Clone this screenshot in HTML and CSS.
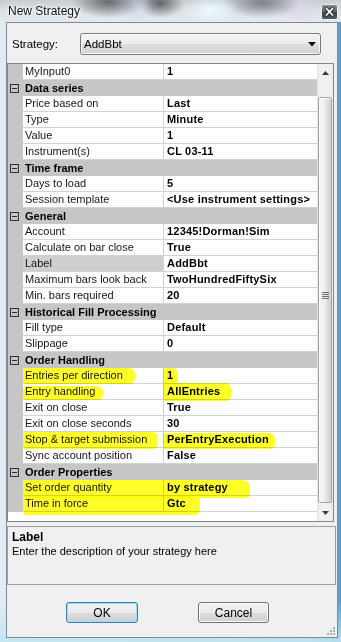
FILE: index.html
```html
<!DOCTYPE html>
<html>
<head>
<meta charset="utf-8">
<link rel="stylesheet" href="styles.css">
</head>
<body>
<div class="window">
  <div class="titlebar">
    <span class="title">New Strategy</span>
    <svg class="close" width="17" height="16" viewBox="0 0 17 16">
      <defs>
        <linearGradient id="cg" x1="0" y1="0" x2="0" y2="1">
          <stop offset="0" stop-color="#8a8d92"/>
          <stop offset="0.5" stop-color="#5b5e63"/>
          <stop offset="0.51" stop-color="#3c3f44"/>
          <stop offset="1" stop-color="#5a5e64"/>
        </linearGradient>
      </defs>
      <rect x="0.5" y="0.5" width="16" height="15" rx="2" fill="url(#cg)" stroke="#f0f0f0"/>
      <path d="M5.5 4.5 L11.5 11 M11.5 4.5 L5.5 11" stroke="#2a2a2a" stroke-width="3.4" stroke-linecap="round"/>
      <path d="M5.5 4.5 L11.5 11 M11.5 4.5 L5.5 11" stroke="#ffffff" stroke-width="1.8" stroke-linecap="round"/>
    </svg>
  </div>
  <div class="frame">
    <div class="client">
      <div class="strategy-row">
        <span class="strategy-label">Strategy:</span>
        <div class="combo">
          <span class="combo-text">AddBbt</span>
          <svg width="8" height="5" viewBox="0 0 8 5"><path d="M0 0 H8 L4 4.5 Z" fill="#111"/></svg>
        </div>
      </div>

      <div class="grid">
        <div class="rows">
          <div class="row"><div class="gut"></div><div class="name">MyInput0</div><div class="val">1</div></div>
          <div class="row cat"><div class="gut"><span class="minus"></span></div><div class="cat-title">Data series</div></div>
          <div class="row"><div class="gut"></div><div class="name">Price based on</div><div class="val">Last</div></div>
          <div class="row"><div class="gut"></div><div class="name">Type</div><div class="val">Minute</div></div>
          <div class="row"><div class="gut"></div><div class="name">Value</div><div class="val">1</div></div>
          <div class="row"><div class="gut"></div><div class="name">Instrument(s)</div><div class="val">CL 03-11</div></div>
          <div class="row cat"><div class="gut"><span class="minus"></span></div><div class="cat-title">Time frame</div></div>
          <div class="row"><div class="gut"></div><div class="name">Days to load</div><div class="val">5</div></div>
          <div class="row"><div class="gut"></div><div class="name">Session template</div><div class="val">&lt;Use instrument settings&gt;</div></div>
          <div class="row cat"><div class="gut"><span class="minus"></span></div><div class="cat-title">General</div></div>
          <div class="row"><div class="gut"></div><div class="name">Account</div><div class="val">12345!Dorman!Sim</div></div>
          <div class="row"><div class="gut"></div><div class="name">Calculate on bar close</div><div class="val">True</div></div>
          <div class="row sel"><div class="gut"></div><div class="name">Label</div><div class="val">AddBbt</div></div>
          <div class="row"><div class="gut"></div><div class="name">Maximum bars look back</div><div class="val">TwoHundredFiftySix</div></div>
          <div class="row"><div class="gut"></div><div class="name">Min. bars required</div><div class="val">20</div></div>
          <div class="row cat"><div class="gut"><span class="minus"></span></div><div class="cat-title">Historical Fill Processing</div></div>
          <div class="row"><div class="gut"></div><div class="name">Fill type</div><div class="val">Default</div></div>
          <div class="row"><div class="gut"></div><div class="name">Slippage</div><div class="val">0</div></div>
          <div class="row cat"><div class="gut"><span class="minus"></span></div><div class="cat-title">Order Handling</div></div>
          <div class="row"><div class="gut"></div><div class="name">Entries per direction</div><div class="val">1</div></div>
          <div class="row"><div class="gut"></div><div class="name">Entry handling</div><div class="val">AllEntries</div></div>
          <div class="row"><div class="gut"></div><div class="name">Exit on close</div><div class="val">True</div></div>
          <div class="row"><div class="gut"></div><div class="name">Exit on close seconds</div><div class="val">30</div></div>
          <div class="row"><div class="gut"></div><div class="name">Stop &amp; target submission</div><div class="val">PerEntryExecution</div></div>
          <div class="row"><div class="gut"></div><div class="name">Sync account position</div><div class="val">False</div></div>
          <div class="row cat"><div class="gut"><span class="minus"></span></div><div class="cat-title">Order Properties</div></div>
          <div class="row"><div class="gut"></div><div class="name">Set order quantity</div><div class="val">by strategy</div></div>
          <div class="row"><div class="gut"></div><div class="name">Time in force</div><div class="val">Gtc</div></div>

          <div class="hl hl-1"></div>
          <div class="hl hl-2"></div>
          <div class="hl hl-3"></div>
          <div class="hl hl-4"></div>
          <div class="hl hl-5"></div>
          <div class="hl hl-6"></div>
          <div class="hl hl-7"></div>
          <div class="hl hl-8"></div>
        </div>
        <div class="sb">
          <div class="sb-btn"><svg width="7" height="4" viewBox="0 0 7 4"><path d="M3.5 0 L7 4 H0 Z" fill="#3c3c3c"/></svg></div>
          <div class="thumb">
            <svg width="7" height="7" viewBox="0 0 7 7">
              <path d="M0 0.5 H7 M0 2.5 H7 M0 4.5 H7 M0 6.5 H7" stroke="#6e6e6e" stroke-width="1"/>
            </svg>
          </div>
          <div class="sb-fill"></div>
          <div class="sb-btn"><svg width="7" height="4" viewBox="0 0 7 4"><path d="M0 0 H7 L3.5 4 Z" fill="#3c3c3c"/></svg></div>
        </div>
      </div>

      <div class="desc">
        <div class="desc-title">Label</div>
        <div class="desc-text">Enter the description of your strategy here</div>
      </div>

      <div class="buttons">
        <button class="btn btn-default">OK</button>
        <button class="btn btn-cancel">Cancel</button>
      </div>

      <svg class="grip" width="10" height="10" viewBox="0 0 10 10">
        <g fill="#b0b0b0">
          <rect x="7" y="1" width="2" height="2"/>
          <rect x="4" y="4" width="2" height="2"/>
          <rect x="7" y="4" width="2" height="2"/>
          <rect x="1" y="7" width="2" height="2"/>
          <rect x="4" y="7" width="2" height="2"/>
          <rect x="7" y="7" width="2" height="2"/>
        </g>
      </svg>
    </div>
  </div>
</div>
</body>
</html>
```

FILE: styles.css
```css
html, body {
  margin: 0;
  padding: 0;
}

body {
  width: 341px;
  height: 642px;
  overflow: hidden;
  font-family: "Liberation Sans", Arial, sans-serif;
  color: #000;
}

.window {
  width: 341px;
  height: 642px;
  display: flex;
  flex-direction: column;
  background:
    linear-gradient(180deg, rgba(255,255,255,0) 600px, rgba(190,230,242,0.9) 642px),
    linear-gradient(90deg, #e3ebf2 0px, #d9e6ef 200px, #b8d3e6 300px, #5b9bcd 341px);
}

.titlebar {
  height: 22px;
  flex: none;
  display: flex;
  align-items: flex-start;
  justify-content: space-between;
  background:
    radial-gradient(ellipse 36px 16px at 108px 2px, rgba(60,64,70,0.7), rgba(60,64,70,0)),
    radial-gradient(ellipse 16px 12px at 136px 10px, rgba(205,222,240,0.8), rgba(205,222,240,0)),
    radial-gradient(ellipse 24px 15px at 160px 3px, rgba(50,54,60,0.7), rgba(50,54,60,0)),
    radial-gradient(ellipse 30px 14px at 210px 10px, rgba(235,252,255,1), rgba(235,252,255,0)),
    radial-gradient(ellipse 38px 15px at 262px 3px, rgba(70,72,80,0.6), rgba(70,72,80,0)),
    radial-gradient(ellipse 24px 12px at 296px 9px, rgba(222,214,236,0.9), rgba(222,214,236,0)),
    linear-gradient(180deg, #c9cdd2 0px, #dde1e5 12px, #e6e9ec 22px);
}

.title {
  font-size: 12px;
  line-height: 22px;
  padding-left: 8px;
  color: #111;
  text-shadow: 0 0 6px #fff, 0 0 3px #fff, 0 0 2px #fff;
}

.close {
  display: block;
  margin-top: 4px;
  margin-right: 3px;
}

.frame {
  flex: 1;
  display: flex;
  padding: 0 3px 4px 6px;
}

.client {
  position: relative;
  flex: 1;
  background: #f0f0f0;
  border: 1px solid #7d8a98;
  display: flex;
  flex-direction: column;
}

.strategy-row {
  display: flex;
  align-items: center;
  margin-top: 10px;
  height: 22px;
  padding-left: 5px;
}

.strategy-label {
  width: 68px;
  font-size: 11.5px;
}

.combo {
  box-sizing: border-box;
  width: 241px;
  height: 22px;
  border: 1px solid #7a7a7a;
  border-radius: 3px;
  background: linear-gradient(180deg, #f3f3f3 0%, #ececec 50%, #dedede 51%, #d2d2d2 100%);
  box-shadow: inset 0 0 0 1px #fafafa;
  display: flex;
  align-items: center;
  justify-content: space-between;
  padding: 0 4px 0 3px;
}

.combo-text {
  font-size: 11.5px;
}

.combo svg {
  display: block;
}

.grid {
  box-sizing: border-box;
  width: 327px;
  height: 459px;
  margin-top: 8px;
  border: 1px solid #828790;
  display: flex;
  background: #fff;
}

.rows {
  position: relative;
  flex: 1;
  overflow: hidden;
  background: #fff;
}

.row {
  display: grid;
  grid-template-columns: 15px 140px 1fr;
  height: 16px;
  font-size: 11px;
}

.gut {
  background: #c6c6c6;
}

.name {
  box-sizing: border-box;
  border-bottom: 1px solid #d2d2d2;
  padding-left: 2px;
  line-height: 15px;
  white-space: nowrap;
  overflow: hidden;
  color: #1a1420;
}

.val {
  box-sizing: border-box;
  border-left: 1px solid #d2d2d2;
  border-bottom: 1px solid #d2d2d2;
  padding-left: 3px;
  line-height: 15px;
  font-weight: bold;
  letter-spacing: 0.2px;
  white-space: nowrap;
  overflow: hidden;
}

.row.sel .name {
  background: #cfcfcf;
}

.row.cat {
  background: #c6c6c6;
}

.cat-title {
  grid-column: 2 / 4;
  padding-left: 2px;
  line-height: 16px;
  font-weight: bold;
  white-space: nowrap;
}

.minus {
  display: block;
  position: relative;
  box-sizing: border-box;
  width: 9px;
  height: 9px;
  margin: 4px 0 0 2px;
  border: 1px solid #2e2e2e;
}

.minus::after {
  content: "";
  position: absolute;
  left: 1px;
  top: 3px;
  width: 5px;
  height: 1px;
  background: #2e2e2e;
}

/* highlighter strokes drawn over the grid */
.hl {
  position: absolute;
  background: #ffff28;
  mix-blend-mode: multiply;
  border-radius: 3px 6px 5px 2px;
}

.hl-1 { left: 15px; top: 304px; width: 112px; height: 16px; }
.hl-2 { left: 155px; top: 304px; width: 15px; height: 16px; }
.hl-3 { left: 15px; top: 322px; width: 80px; height: 14px; }
.hl-4 { left: 155px; top: 319px; width: 68px; height: 18px; }
.hl-5 { left: 15px; top: 368px; width: 135px; height: 17px; }
.hl-6 { left: 155px; top: 369px; width: 112px; height: 16px; }
.hl-7 { left: 15px; top: 416px; width: 227px; height: 18px; border-radius: 2px 8px 4px 2px; }
.hl-8 { left: 15px; top: 432px; width: 177px; height: 19px; border-radius: 0 6px 6px 4px; }

.sb {
  width: 16px;
  flex: none;
  display: flex;
  flex-direction: column;
  background: linear-gradient(90deg, #e4e4e4 0px, #f1f1f1 3px, #f1f1f1 12px, #e9e9e9 16px);
}

.sb-btn {
  height: 17px;
  flex: none;
  display: flex;
  align-items: center;
  justify-content: center;
}

.sb-btn svg {
  display: block;
}

.thumb {
  box-sizing: border-box;
  flex: none;
  height: 406px;
  margin: 16px 1px 0 1px;
  border: 1px solid #a4a4a4;
  border-radius: 2px;
  background: linear-gradient(90deg, #f6f6f6 0px, #eeeeee 6px, #dedede 8px, #d0d0d0 13px);
  box-shadow: inset 1px 1px 0 #fdfdfd;
  display: flex;
  align-items: center;
  justify-content: center;
}

.thumb svg {
  display: block;
  margin-top: -10px;
}

.sb-fill {
  flex: 1;
}

.desc {
  box-sizing: border-box;
  width: 329px;
  height: 59px;
  margin-top: 4px;
  border: 1px solid #a0a0a0;
  padding: 3px 4px;
}

.desc-title {
  font-size: 12px;
  font-weight: bold;
  line-height: 14px;
}

.desc-text {
  font-size: 11px;
  line-height: 14px;
}

.buttons {
  display: flex;
  margin-top: 17px;
  padding-left: 59px;
  gap: 60px;
}

.btn {
  box-sizing: border-box;
  height: 21px;
  margin: 0;
  padding: 0;
  font-family: "Liberation Sans", Arial, sans-serif;
  font-size: 12px;
  color: #000;
  border: 1px solid #707070;
  border-radius: 3px;
  background: linear-gradient(180deg, #f2f2f2 0%, #ebebeb 50%, #dddddd 51%, #cfcfcf 100%);
  box-shadow: inset 0 0 0 1px #fcfcfc;
}

.btn-default {
  width: 72px;
  border-color: #3c7fb1;
  box-shadow: inset 0 0 0 1px #9fdcf9;
}

.btn-cancel {
  width: 71px;
}

.grip {
  position: absolute;
  right: 1px;
  bottom: 1px;
  display: block;
}
```
